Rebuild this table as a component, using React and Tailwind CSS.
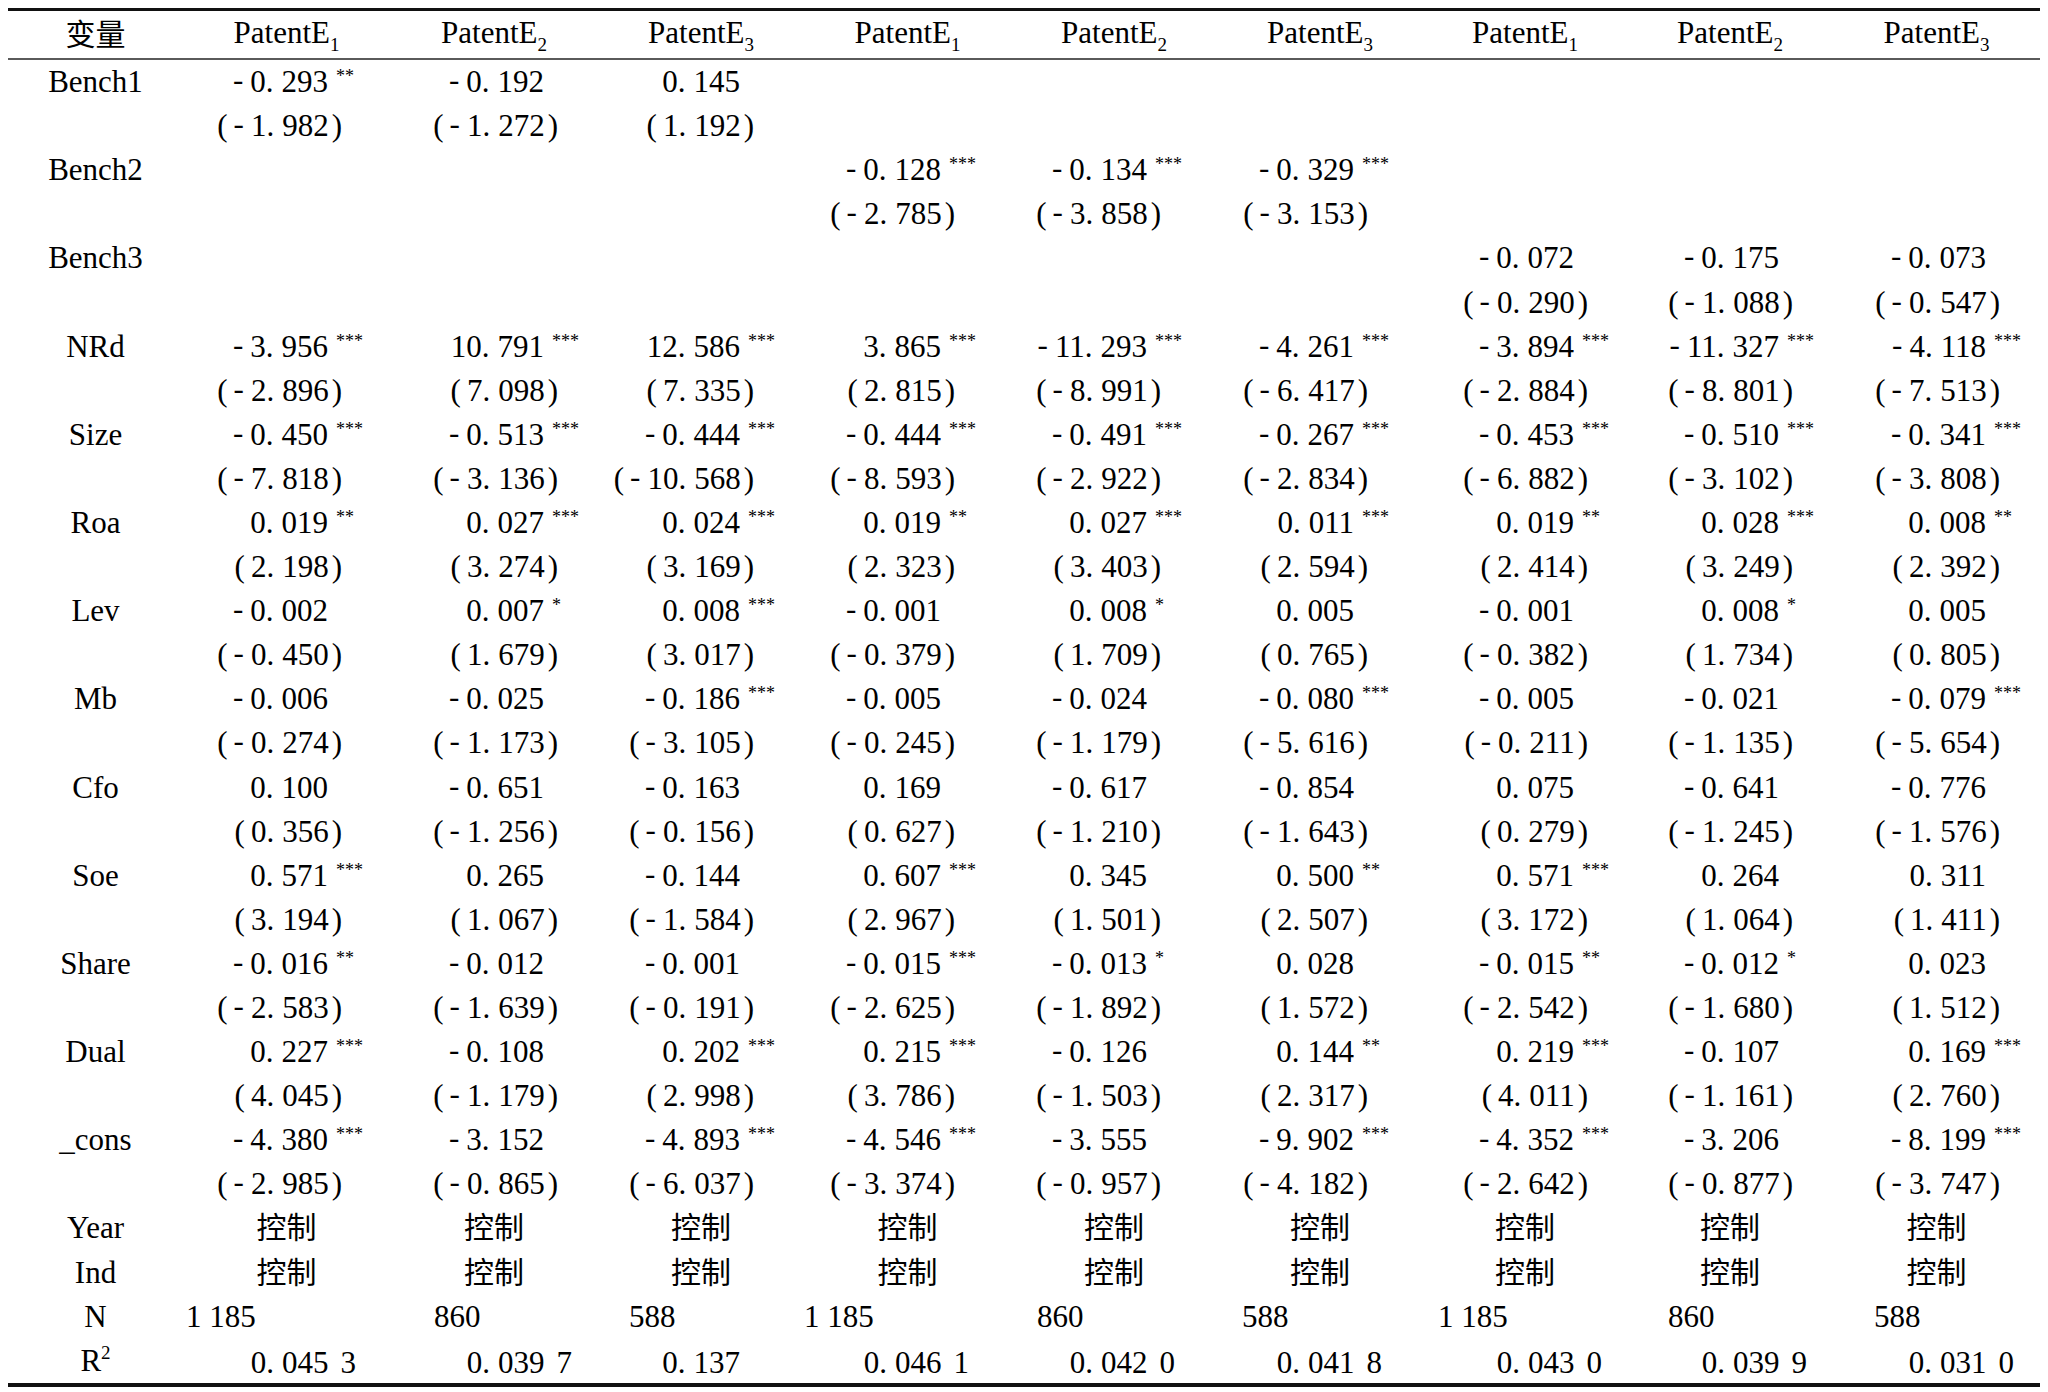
const COLS =
  "grid grid-cols-[175px_207px_208px_206px_207px_206px_206px_204px_206px_207px]";

// right padding so the last digit of every number lines up per column
const PAD = ["pr-[62px]", "pr-[54px]", "pr-[64px]", "pr-[70px]", "pr-[70px]", "pr-[69px]", "pr-[53px]", "pr-[54px]", "pr-[54px]"];
const PAREN_PAD = ["pr-[48px]", "pr-[40px]", "pr-[50px]", "pr-[56px]", "pr-[56px]", "pr-[55px]", "pr-[39px]", "pr-[40px]", "pr-[40px]"];
const R2_PAD = ["pr-[34px]", "pr-[26px]", "pr-[64px]", "pr-[42px]", "pr-[42px]", "pr-[41px]", "pr-[25px]", "pr-[26px]", "pr-[26px]"];
const N_PAD = ["pl-[3px]", "pl-[44px]", "pl-[31px]", "pl-[0px]", "pl-[26px]", "pl-[25px]", "pl-[15px]", "pl-[41px]", "pl-[41px]"];

const E = ["", "", "", "", "", "", "", "", ""];

const rows = [
  { label: "Bench1", coef: ["-0.293**", "-0.192", "0.145", "", "", "", "", "", ""], t: ["-1.982", "-1.272", "1.192", "", "", "", "", "", ""] },
  { label: "Bench2", coef: ["", "", "", "-0.128***", "-0.134***", "-0.329***", "", "", ""], t: ["", "", "", "-2.785", "-3.858", "-3.153", "", "", ""] },
  { label: "Bench3", coef: ["", "", "", "", "", "", "-0.072", "-0.175", "-0.073"], t: ["", "", "", "", "", "", "-0.290", "-1.088", "-0.547"] },
  {
    label: "NRd",
    coef: ["-3.956***", "10.791***", "12.586***", "3.865***", "-11.293***", "-4.261***", "-3.894***", "-11.327***", "-4.118***"],
    t: ["-2.896", "7.098", "7.335", "2.815", "-8.991", "-6.417", "-2.884", "-8.801", "-7.513"],
  },
  {
    label: "Size",
    coef: ["-0.450***", "-0.513***", "-0.444***", "-0.444***", "-0.491***", "-0.267***", "-0.453***", "-0.510***", "-0.341***"],
    t: ["-7.818", "-3.136", "-10.568", "-8.593", "-2.922", "-2.834", "-6.882", "-3.102", "-3.808"],
  },
  {
    label: "Roa",
    coef: ["0.019**", "0.027***", "0.024***", "0.019**", "0.027***", "0.011***", "0.019**", "0.028***", "0.008**"],
    t: ["2.198", "3.274", "3.169", "2.323", "3.403", "2.594", "2.414", "3.249", "2.392"],
  },
  {
    label: "Lev",
    coef: ["-0.002", "0.007*", "0.008***", "-0.001", "0.008*", "0.005", "-0.001", "0.008*", "0.005"],
    t: ["-0.450", "1.679", "3.017", "-0.379", "1.709", "0.765", "-0.382", "1.734", "0.805"],
  },
  {
    label: "Mb",
    coef: ["-0.006", "-0.025", "-0.186***", "-0.005", "-0.024", "-0.080***", "-0.005", "-0.021", "-0.079***"],
    t: ["-0.274", "-1.173", "-3.105", "-0.245", "-1.179", "-5.616", "-0.211", "-1.135", "-5.654"],
  },
  {
    label: "Cfo",
    coef: ["0.100", "-0.651", "-0.163", "0.169", "-0.617", "-0.854", "0.075", "-0.641", "-0.776"],
    t: ["0.356", "-1.256", "-0.156", "0.627", "-1.210", "-1.643", "0.279", "-1.245", "-1.576"],
  },
  {
    label: "Soe",
    coef: ["0.571***", "0.265", "-0.144", "0.607***", "0.345", "0.500**", "0.571***", "0.264", "0.311"],
    t: ["3.194", "1.067", "-1.584", "2.967", "1.501", "2.507", "3.172", "1.064", "1.411"],
  },
  {
    label: "Share",
    coef: ["-0.016**", "-0.012", "-0.001", "-0.015***", "-0.013*", "0.028", "-0.015**", "-0.012*", "0.023"],
    t: ["-2.583", "-1.639", "-0.191", "-2.625", "-1.892", "1.572", "-2.542", "-1.680", "1.512"],
  },
  {
    label: "Dual",
    coef: ["0.227***", "-0.108", "0.202***", "0.215***", "-0.126", "0.144**", "0.219***", "-0.107", "0.169***"],
    t: ["4.045", "-1.179", "2.998", "3.786", "-1.503", "2.317", "4.011", "-1.161", "2.760"],
  },
  {
    label: "_cons",
    coef: ["-4.380***", "-3.152", "-4.893***", "-4.546***", "-3.555", "-9.902***", "-4.352***", "-3.206", "-8.199***"],
    t: ["-2.985", "-0.865", "-6.037", "-3.374", "-0.957", "-4.182", "-2.642", "-0.877", "-3.747"],
  },
];

const N = ["1 185", "860", "588", "1 185", "860", "588", "1 185", "860", "588"];
const R2 = ["0.045 3", "0.039 7", "0.137", "0.046 1", "0.042 0", "0.041 8", "0.043 0", "0.039 9", "0.031 0"];

function Value({ text }) {
  const m = text.match(/^(-?)(\d+)\.(\d+)(?: (\d+))?(\**)$/);
  const [, sign, int, dec, extra, stars] = m;
  return (
    <span className="relative whitespace-nowrap">
      {sign && <span className="relative -top-[2px] mr-[7px]">-</span>}
      {int}.<span className="ml-[8px]">{dec}</span>
      {extra && <span className="ml-[12px]">{extra}</span>}
      {stars && (
        <span className="absolute left-full top-[7px] ml-[8px] text-[18px] leading-none">{stars}</span>
      )}
    </span>
  );
}

function Label({ children }) {
  return <div className="text-center">{children}</div>;
}

function Row({ children }) {
  return <div className={`${COLS} h-[44.1px] items-center`}>{children}</div>;
}

export default function App() {
  return (
    <div className="w-[2048px] h-[1392px] bg-white pt-[8px] pl-[8px] text-black font-['Liberation_Serif','Noto_Sans_CJK_SC',serif] text-[31px] leading-[44px]">
      <div className="w-[2032px]">
        {/* Header */}
        <div className={`${COLS} h-[52px] items-center border-t-[3px] border-t-[#111] border-b-[2px] border-b-[#5a5a5a]`}>
          <Label>
            <span className="text-[30px]">变量</span>
          </Label>
          {[1, 2, 3, 1, 2, 3, 1, 2, 3].map((k, i) => (
            <div key={i} className="text-center whitespace-nowrap">
              PatentE<span className="relative top-[8px] text-[19px]">{k}</span>
            </div>
          ))}
        </div>

        {/* Body */}
        <div className="border-b-[4px] border-b-[#111]">
          {rows.map((r) => (
            <div key={r.label}>
              <Row>
                <Label>{r.label}</Label>
                {r.coef.map((v, i) => (
                  <div key={i} className={`flex justify-end ${PAD[i]}`}>
                    {v && <Value text={v} />}
                  </div>
                ))}
              </Row>
              <Row>
                <div />
                {r.t.map((v, i) => (
                  <div key={i} className={`flex justify-end ${PAREN_PAD[i]}`}>
                    {v && (
                      <span className="whitespace-nowrap">
                        <span className="mr-[6px]">(</span>
                        <Value text={v} />
                        <span className="ml-[3px]">)</span>
                      </span>
                    )}
                  </div>
                ))}
              </Row>
            </div>
          ))}

          {["Year", "Ind"].map((l) => (
            <Row key={l}>
              <Label>{l}</Label>
              {E.map((_, i) => (
                <div key={i} className="text-center text-[30px]">
                  控制
                </div>
              ))}
            </Row>
          ))}

          <Row>
            <Label>N</Label>
            {N.map((v, i) => (
              <div key={i} className={`whitespace-nowrap ${N_PAD[i]}`}>
                {v}
              </div>
            ))}
          </Row>

          <Row>
            <Label>
              R<span className="relative -top-[12px] text-[19px]">2</span>
            </Label>
            {R2.map((v, i) => (
              <div key={i} className={`flex justify-end ${R2_PAD[i]}`}>
                <Value text={v} />
              </div>
            ))}
          </Row>
        </div>
      </div>
    </div>
  );
}
